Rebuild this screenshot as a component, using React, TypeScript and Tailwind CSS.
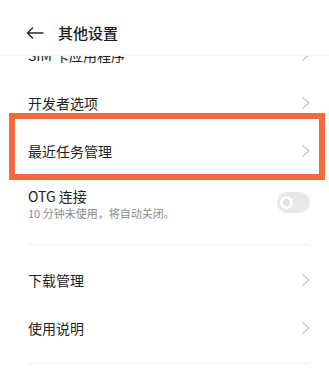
import React from 'react';

const Chevron = () => (
    <svg width="8" height="12" viewBox="0 0 8 12" fill="none" className="shrink-0">
        <polyline points="1,1 7,6 1,11" stroke="#c6c6c6" strokeWidth="1.3" strokeLinecap="round" strokeLinejoin="round" />
    </svg>
);

const Row = ({ label, highlight }: { label: string; highlight?: boolean }) => (
    <div className="relative h-[48px] flex items-center justify-between pl-[28px] pr-[19px]">
        <span className="text-[14px] leading-[20px] text-[#222]">{label}</span>
        <Chevron />
        {highlight && (
            <div className="absolute left-[9px] right-[4px] top-[-14px] bottom-[-5px] border-[6px] border-[#f46a3c]" />
        )}
    </div>
);

export default function App() {
    return (
        <div
            className="w-[329px] h-[375px] bg-white overflow-hidden flex flex-col"
            style={{ fontFamily: '"Noto Sans CJK SC", "Noto Sans", sans-serif' }}
        >
            {/* header */}
            <div className="relative z-10 h-[56px] shrink-0 bg-white border-b border-[#f2f2f2] flex items-center pl-[26px] pt-[10px]">
                <svg width="18" height="12" viewBox="0 0 18 12" fill="none">
                    <path d="M17 6H1.5M6.5 1L1.5 6l5 5" stroke="#2a2a2a" strokeWidth="1.5" strokeLinecap="round" strokeLinejoin="round" />
                </svg>
                <span className="ml-[14px] text-[15px] leading-[20px] font-medium text-[#1a1a1a]">其他设置</span>
            </div>

            {/* list */}
            <div className="-mt-[25px] flex flex-col">
                <Row label="SIM 卡应用程序" />
                <Row label="开发者选项" />
                <Row label="最近任务管理" highlight />

                <div className="h-[69px] flex items-start justify-between pl-[28px] pr-[19px] pt-[12px]">
                    <div className="flex flex-col">
                        <span className="text-[14px] leading-[18px] text-[#222]">OTG 连接</span>
                        <span className="text-[11px] leading-[16px] text-[#8a8a8a]">10 分钟未使用，将自动关闭。</span>
                    </div>
                    <div className="mt-[5px] w-[33px] h-[21px] rounded-full bg-[#e8e8e8] flex items-center pl-[3px]">
                        <div className="w-[13px] h-[13px] rounded-full border-[3px] border-white bg-[#e0e0e0]" />
                    </div>
                </div>
                <div className="mx-[28px] mr-[19px] h-px bg-[#efefef]" />

                <div className="mt-[11px]">
                    <Row label="下载管理" />
                    <Row label="使用说明" />
                </div>
                <div className="mt-[11px] mx-[28px] mr-[19px] h-px bg-[#efefef]" />
            </div>
        </div>
    );
}
